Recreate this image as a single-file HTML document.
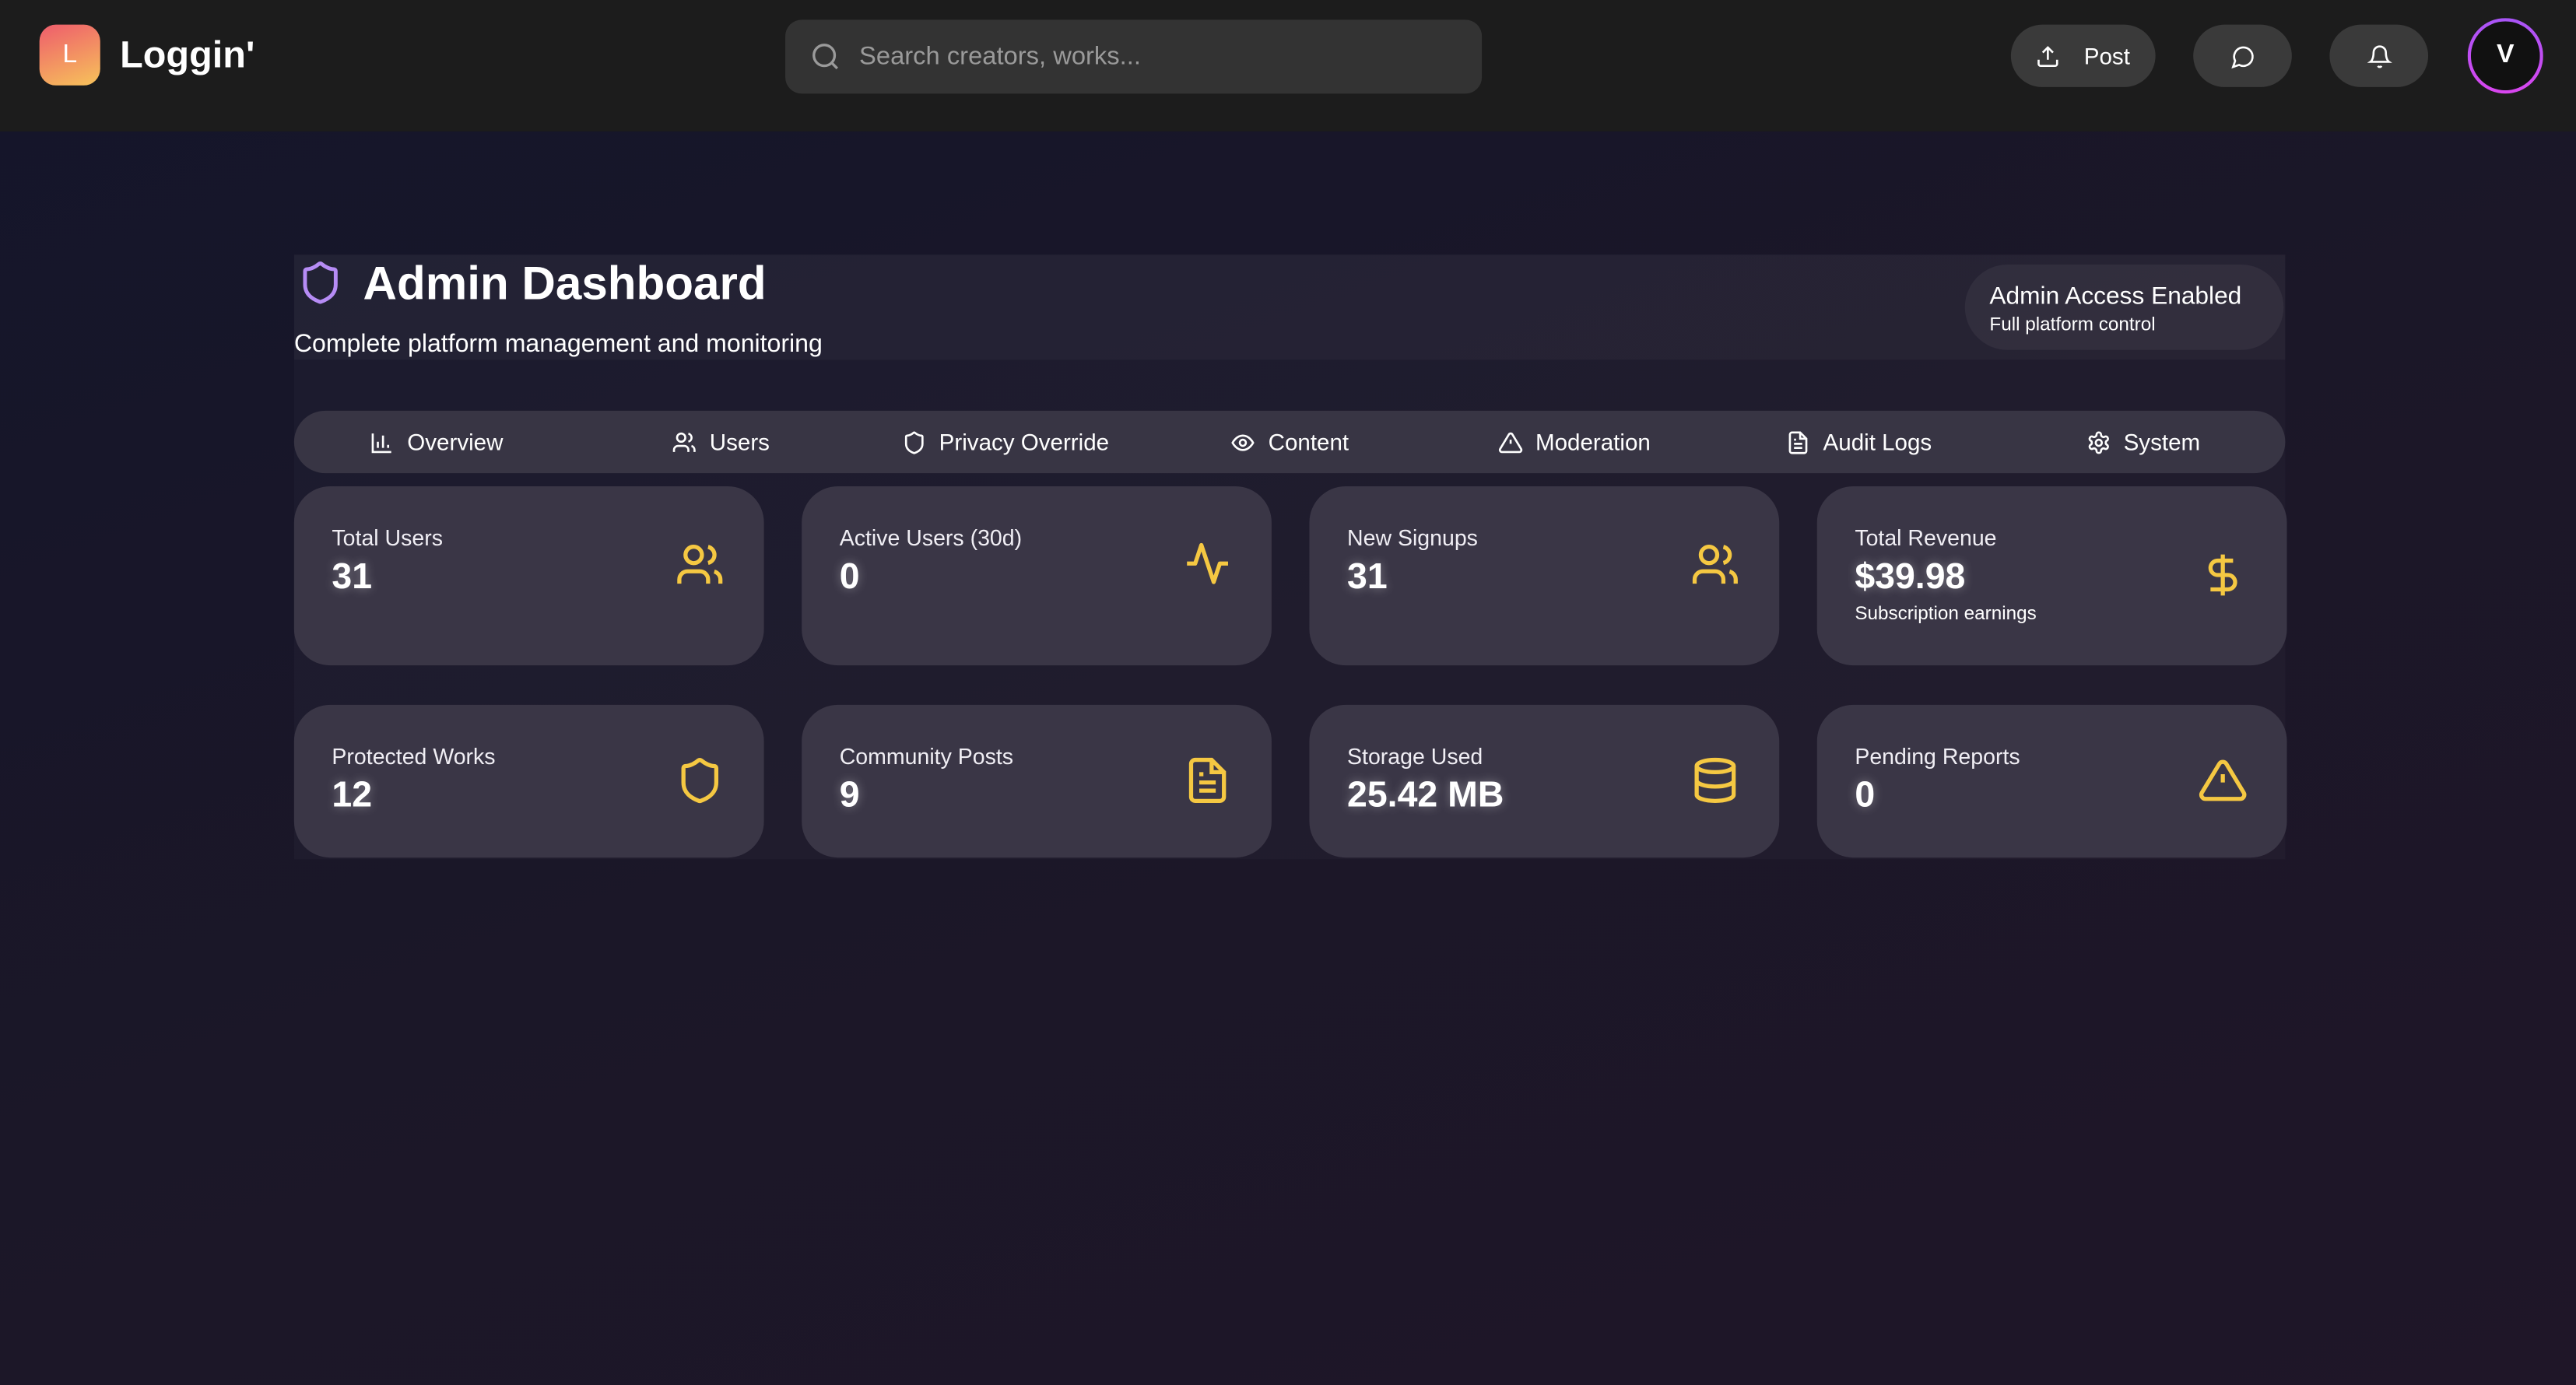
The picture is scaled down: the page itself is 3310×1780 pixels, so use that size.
<!DOCTYPE html>
<html><head><meta charset="utf-8"><style>
*{box-sizing:border-box;margin:0;padding:0}
html,body{width:3310px;height:1780px;overflow:hidden;background:#16152a}
#s{width:1568px;height:843px;transform:scale(2.1110,2.1115);transform-origin:0 0;position:relative;font-family:"Liberation Sans",sans-serif;color:#fff;background:linear-gradient(160deg,#14152a 0%,#1b1728 50%,#1f1628 100%)}
.hdr{position:absolute;left:0;top:0;width:1568px;height:80px;background:#1c1c1c}
.abs{position:absolute}
svg{display:block}
.btn{position:absolute;top:15px;height:38px;background:#3a3a3a;border-radius:19px;display:flex;align-items:center;justify-content:center;gap:14px;font-size:14px}
.wrap{position:absolute;left:179px;top:155px;width:1212px;height:368px;background:rgba(255,255,255,0.025)}
.tabs{position:absolute;left:179px;top:250px;width:1212px;height:38px;background:#383544;border-radius:19px;display:flex}
.tab{flex:1;display:flex;align-items:center;justify-content:center;gap:8px;font-size:14px}
.card{position:absolute;width:286px;background:#3a3646;border-radius:22px;padding:24px 23px}
.lbl{font-size:13.5px;color:#f0eef4}
.val{font-size:22px;font-weight:bold;margin-top:3px;text-shadow:0 0 6px rgba(255,255,255,.35)}
.sub{font-size:11.5px;margin-top:4px}
.ic{position:absolute;right:24px}
</style></head><body><div id="s">
<div class="hdr">
 <div class="abs" style="left:24px;top:15px;width:37px;height:37px;border-radius:10px;background:linear-gradient(160deg,#ee5c6c,#f7c35a);font-size:16px;display:flex;align-items:center;justify-content:center">L</div>
 <div class="abs" style="left:73px;top:20px;font-size:23px;font-weight:bold">Loggin'</div>
 <div class="abs" style="left:478px;top:12px;width:424px;height:45px;background:#333;border-radius:10px">
  <svg class="abs" style="left:15px;top:13px" width="19" height="19" viewBox="0 0 24 24" fill="none" stroke="#9a9a9a" stroke-width="2"><circle cx="11" cy="11" r="8"/><path d="M21 21l-4.3-4.3"/></svg>
  <div class="abs" style="left:45px;top:14px;font-size:15.5px;color:#9a9a9a">Search creators, works...</div>
 </div>
 <div class="btn" style="left:1224px;width:88px"><svg width="15" height="15" viewBox="0 0 24 24" fill="none" stroke="#fff" stroke-width="2"><path d="M21 15v4a2 2 0 0 1-2 2H5a2 2 0 0 1-2-2v-4M17 8l-5-5-5 5M12 3v12"/></svg>Post</div>
 <div class="btn" style="left:1335px;width:60px"><svg width="15" height="15" viewBox="0 0 24 24" fill="none" stroke="#fff" stroke-width="2"><path d="M7.9 20A9 9 0 1 0 4 16.1L2 22Z"/></svg></div>
 <div class="btn" style="left:1418px;width:60px"><svg width="15" height="15" viewBox="0 0 24 24" fill="none" stroke="#fff" stroke-width="2"><path d="M6 8a6 6 0 0 1 12 0c0 7 3 9 3 9H3s3-2 3-9M10.3 21a1.9 1.9 0 0 0 3.4 0"/></svg></div>
 <div class="abs" style="left:1502px;top:11px;width:46px;height:46px;border-radius:50%;background:linear-gradient(#111,#111) padding-box,linear-gradient(#a855f7,#d946ef) border-box;border:2px solid transparent;display:flex;align-items:center;justify-content:center;font-weight:bold;font-size:16px">V</div>
</div>
<div class="wrap"></div>
<div class="abs" style="left:179px;top:155px;width:1212px;height:64px;background:rgba(255,255,255,0.03)"></div>
<svg class="abs" style="left:181px;top:157px" width="28" height="30" viewBox="0 0 24 24" fill="none" stroke="#b68cf5" stroke-width="2" stroke-linejoin="round"><path d="M20 13c0 5-3.5 7.5-7.7 9a1 1 0 0 1-.7 0C7.5 20.5 4 18 4 13V6a1 1 0 0 1 1-1c2 0 4.5-1.2 6.2-2.7a1.2 1.2 0 0 1 1.5 0C14.5 3.8 17 5 19 5a1 1 0 0 1 1 1z"/></svg>
<div class="abs" style="left:221px;top:157px;font-size:28.5px;font-weight:bold">Admin Dashboard</div>
<div class="abs" style="left:179px;top:201px;font-size:15.2px">Complete platform management and monitoring</div>
<div class="abs" style="left:1196px;top:161px;width:194px;height:52px;border-radius:26px;background:rgba(255,255,255,0.05);padding:11px 0 0 15px"><div style="font-size:15px">Admin Access Enabled</div><div style="font-size:11.5px;margin-top:3px">Full platform control</div></div>
<div class="tabs">
 <div class="tab"><svg width="15" height="15" viewBox="0 0 24 24" fill="none" stroke="#fff" stroke-width="2"><path d="M3 3v18h18M8 17v-6M13 17V5M18 17v-3"/></svg>Overview</div>
 <div class="tab"><svg width="15" height="15" viewBox="0 0 24 24" fill="none" stroke="#fff" stroke-width="2"><path d="M16 21v-2a4 4 0 0 0-4-4H6a4 4 0 0 0-4 4v2"/><circle cx="9" cy="7" r="4"/><path d="M22 21v-2a4 4 0 0 0-3-3.9M16 3.1a4 4 0 0 1 0 7.8"/></svg>Users</div>
 <div class="tab"><svg width="15" height="15" viewBox="0 0 24 24" fill="none" stroke="#fff" stroke-width="2"><path d="M20 13c0 5-3.5 7.5-7.7 9a1 1 0 0 1-.7 0C7.5 20.5 4 18 4 13V6a1 1 0 0 1 1-1c2 0 4.5-1.2 6.2-2.7a1.2 1.2 0 0 1 1.5 0C14.5 3.8 17 5 19 5a1 1 0 0 1 1 1z"/></svg>Privacy Override</div>
 <div class="tab"><svg width="15" height="15" viewBox="0 0 24 24" fill="none" stroke="#fff" stroke-width="2"><path d="M2 12s3.5-7 10-7 10 7 10 7-3.5 7-10 7S2 12 2 12z"/><circle cx="12" cy="12" r="3"/></svg>Content</div>
 <div class="tab"><svg width="15" height="15" viewBox="0 0 24 24" fill="none" stroke="#fff" stroke-width="2"><path d="M10.3 3.9 1.8 18a2 2 0 0 0 1.7 3h17a2 2 0 0 0 1.7-3L13.7 3.9a2 2 0 0 0-3.4 0zM12 9v4M12 17h.01"/></svg>Moderation</div>
 <div class="tab"><svg width="15" height="15" viewBox="0 0 24 24" fill="none" stroke="#fff" stroke-width="2"><path d="M14 2H6a2 2 0 0 0-2 2v16a2 2 0 0 0 2 2h12a2 2 0 0 0 2-2V8z"/><path d="M14 2v6h6M16 13H8M16 17H8M10 9H8"/></svg>Audit Logs</div>
 <div class="tab"><svg width="15" height="15" viewBox="0 0 24 24" fill="none" stroke="#fff" stroke-width="2"><circle cx="12" cy="12" r="3"/><path d="M12.2 2h-.4a2 2 0 0 0-2 2v.2a2 2 0 0 1-1 1.7l-.4.3a2 2 0 0 1-2 0l-.2-.1a2 2 0 0 0-2.7.7l-.2.4a2 2 0 0 0 .7 2.7l.2.1a2 2 0 0 1 1 1.7v.5a2 2 0 0 1-1 1.7l-.2.1a2 2 0 0 0-.7 2.7l.2.4a2 2 0 0 0 2.7.7l.2-.1a2 2 0 0 1 2 0l.4.3a2 2 0 0 1 1 1.7v.2a2 2 0 0 0 2 2h.4a2 2 0 0 0 2-2v-.2a2 2 0 0 1 1-1.7l.4-.3a2 2 0 0 1 2 0l.2.1a2 2 0 0 0 2.7-.7l.2-.4a2 2 0 0 0-.7-2.7l-.2-.1a2 2 0 0 1-1-1.7v-.5a2 2 0 0 1 1-1.7l.2-.1a2 2 0 0 0 .7-2.7l-.2-.4a2 2 0 0 0-2.7-.7l-.2.1a2 2 0 0 1-2 0l-.4-.3a2 2 0 0 1-1-1.7V4a2 2 0 0 0-2-2z"/></svg>System</div>
</div>

<div class="card" style="left:179px;top:296px;height:109px"><div class="lbl">Total Users</div><div class="val">31</div>
<svg class="ic" style="top:33px" width="30" height="30" viewBox="0 0 24 24" fill="none" stroke="#f5c842" stroke-width="2"><path d="M16 21v-2a4 4 0 0 0-4-4H6a4 4 0 0 0-4 4v2"/><circle cx="9" cy="7" r="4"/><path d="M22 21v-2a4 4 0 0 0-3-3.9M16 3.1a4 4 0 0 1 0 7.8"/></svg></div>
<div class="card" style="left:488px;top:296px;height:109px"><div class="lbl">Active Users (30d)</div><div class="val">0</div>
<svg class="ic" style="top:32px" width="30" height="30" viewBox="0 0 24 24" fill="none" stroke="#f5c842" stroke-width="2" stroke-linejoin="round"><path d="M22 12h-4l-3 9L9 3l-3 9H2"/></svg></div>
<div class="card" style="left:797px;top:296px;height:109px"><div class="lbl">New Signups</div><div class="val">31</div>
<svg class="ic" style="top:33px" width="30" height="30" viewBox="0 0 24 24" fill="none" stroke="#f5c842" stroke-width="2"><path d="M16 21v-2a4 4 0 0 0-4-4H6a4 4 0 0 0-4 4v2"/><circle cx="9" cy="7" r="4"/><path d="M22 21v-2a4 4 0 0 0-3-3.9M16 3.1a4 4 0 0 1 0 7.8"/></svg></div>
<div class="card" style="left:1106px;top:296px;height:109px"><div class="lbl">Total Revenue</div><div class="val">$39.98</div><div class="sub">Subscription earnings</div>
<svg class="ic" style="top:39px" width="30" height="30" viewBox="0 0 24 24" fill="none" stroke="#f5c842" stroke-width="2"><path d="M12 2v20M17 5H9.5a3.5 3.5 0 0 0 0 7h5a3.5 3.5 0 0 1 0 7H6"/></svg></div>

<div class="card" style="left:179px;top:429px;height:93px"><div class="lbl">Protected Works</div><div class="val">12</div>
<svg class="ic" style="top:31px" width="30" height="30" viewBox="0 0 24 24" fill="none" stroke="#f5c842" stroke-width="2"><path d="M20 13c0 5-3.5 7.5-7.7 9a1 1 0 0 1-.7 0C7.5 20.5 4 18 4 13V6a1 1 0 0 1 1-1c2 0 4.5-1.2 6.2-2.7a1.2 1.2 0 0 1 1.5 0C14.5 3.8 17 5 19 5a1 1 0 0 1 1 1z"/></svg></div>
<div class="card" style="left:488px;top:429px;height:93px"><div class="lbl">Community Posts</div><div class="val">9</div>
<svg class="ic" style="top:31px" width="30" height="30" viewBox="0 0 24 24" fill="none" stroke="#f5c842" stroke-width="2"><path d="M14 2H6a2 2 0 0 0-2 2v16a2 2 0 0 0 2 2h12a2 2 0 0 0 2-2V8z"/><path d="M14 2v6h6M16 13H8M16 17H8M10 9H8"/></svg></div>
<div class="card" style="left:797px;top:429px;height:93px"><div class="lbl">Storage Used</div><div class="val">25.42 MB</div>
<svg class="ic" style="top:31px" width="30" height="30" viewBox="0 0 24 24" fill="none" stroke="#f5c842" stroke-width="2"><ellipse cx="12" cy="5" rx="9" ry="3"/><path d="M3 5v14a9 3 0 0 0 18 0V5M3 12a9 3 0 0 0 18 0"/></svg></div>
<div class="card" style="left:1106px;top:429px;height:93px"><div class="lbl">Pending Reports</div><div class="val">0</div>
<svg class="ic" style="top:31px" width="30" height="30" viewBox="0 0 24 24" fill="none" stroke="#f5c842" stroke-width="2"><path d="M10.3 3.9 1.8 18a2 2 0 0 0 1.7 3h17a2 2 0 0 0 1.7-3L13.7 3.9a2 2 0 0 0-3.4 0zM12 9v4M12 17h.01"/></svg></div>
</div></body></html>
